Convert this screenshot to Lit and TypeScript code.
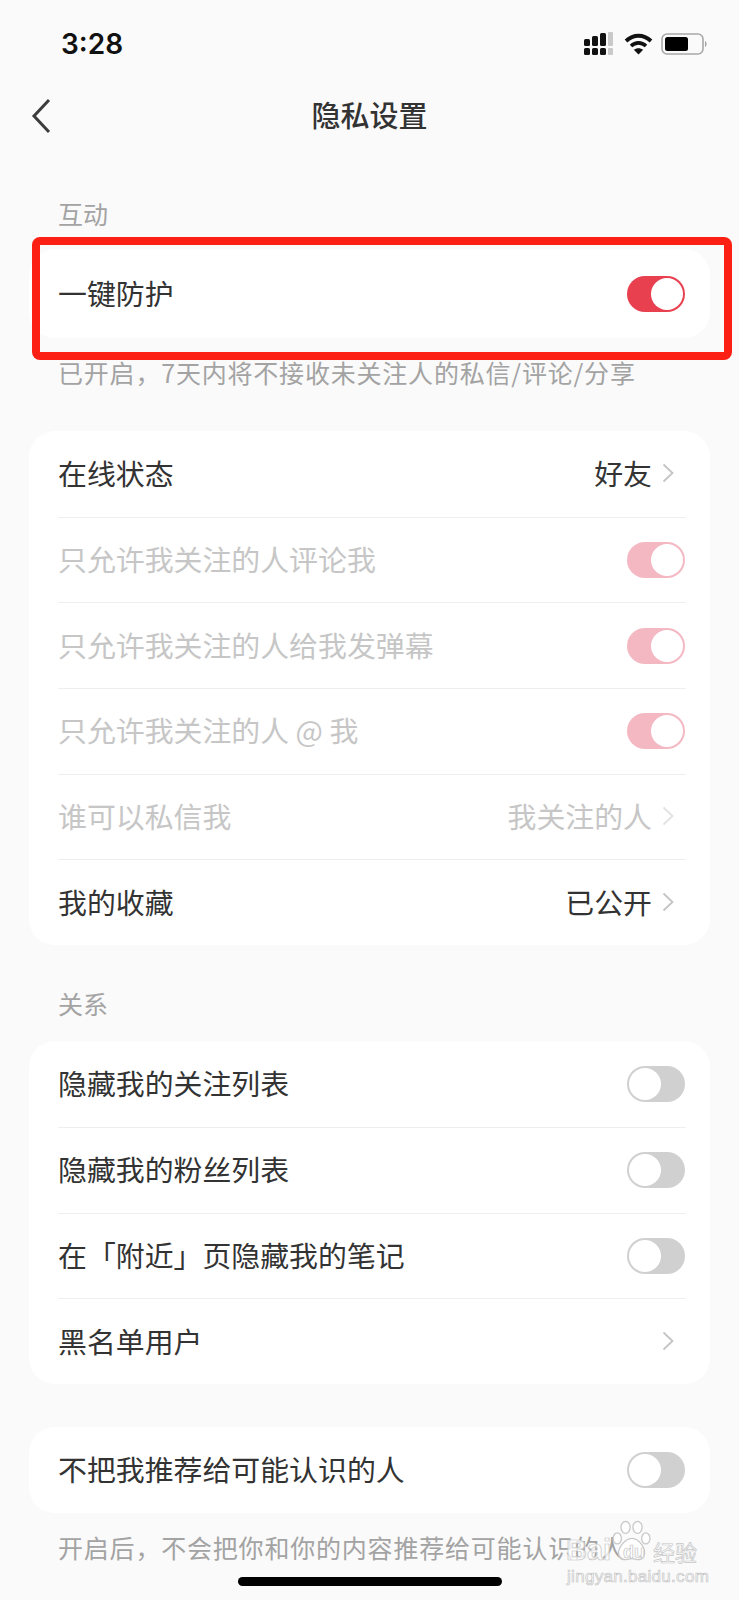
import { LitElement, css, html, nothing } from "lit";
import { customElement } from "lit/decorators.js";
import { classMap } from "lit/directives/class-map.js";

type Row = {
  label: string;
  value?: string;
  toggle?: "on" | "off";
  chevron?: boolean;
  dim?: boolean;
};

const privacy: Row[] = [
  { label: "在线状态", value: "好友", chevron: true },
  { label: "只允许我关注的人评论我", toggle: "on", dim: true },
  { label: "只允许我关注的人给我发弹幕", toggle: "on", dim: true },
  { label: "只允许我关注的人 @ 我", toggle: "on", dim: true },
  { label: "谁可以私信我", value: "我关注的人", chevron: true, dim: true },
  { label: "我的收藏", value: "已公开", chevron: true },
];

const relations: Row[] = [
  { label: "隐藏我的关注列表", toggle: "off" },
  { label: "隐藏我的粉丝列表", toggle: "off" },
  { label: "在「附近」页隐藏我的笔记", toggle: "off" },
  { label: "黑名单用户", chevron: true },
];

@customElement("app-root")
export class AppRoot extends LitElement {
  static styles = css`
    :host {
      display: block;
      position: relative;
      width: 739px;
      height: 1600px;
      overflow: hidden;
      background: #fafafa;
      font-family: "Noto Sans CJK SC", "Noto Sans", sans-serif;
      color: #333;
    }

    .status {
      height: 80px;
      padding: 8px 32px 0 61px;
      box-sizing: border-box;
      display: flex;
      align-items: center;
      justify-content: space-between;
    }

    .time {
      font-family: "Inter", sans-serif;
      font-weight: 600;
      font-size: 28px;
      color: #111;
    }

    .status-icons {
      display: flex;
      align-items: center;
      gap: 8px;
    }

    .signal {
      margin-right: 2px;
    }

    .nav {
      height: 72px;
      box-sizing: border-box;
      padding-bottom: 4px;
      position: relative;
      display: flex;
      align-items: center;
      justify-content: center;
    }

    .back {
      position: absolute;
      left: 31px;
      top: 18px;
    }

    .title {
      font-size: 29px;
      font-weight: 500;
      color: #333;
    }

    main {
      padding: 0 29px;
    }

    .label,
    .note {
      height: 34px;
      padding-left: 29px;
      font-size: 25px;
      color: #a3a3a3;
      white-space: nowrap;
    }

    .label {
      line-height: 30px;
    }

    .note {
      line-height: 28px;
      letter-spacing: 0.8px;
    }

    .label.first {
      margin-top: 46px;
      margin-bottom: 17px;
    }

    .label.second {
      margin-top: 43px;
      margin-bottom: 19px;
    }

    .note.first {
      margin-top: 20px;
      margin-bottom: 39px;
    }

    .note.last {
      margin-top: 20px;
    }

    .card {
      position: relative;
      background: #fff;
      border-radius: 26px;
      width: 681px;
    }

    .card.gap {
      margin-top: 43px;
    }

    .row {
      height: 85.7px;
      margin: 0 24px 0 29px;
      display: flex;
      align-items: center;
      justify-content: space-between;
      box-sizing: border-box;
      border-top: 1px solid #eeeeee;
      font-size: 28.9px;
      color: #333;
    }

    .row:first-child {
      border-top: none;
    }

    .row.tall {
      height: 89px;
    }

    .row.dim {
      color: #c6c6c6;
    }

    .text {
      margin-bottom: 4px;
    }

    .right {
      display: flex;
      align-items: center;
    }

    .value {
      margin-right: 10px;
      margin-bottom: 4px;
    }

    .chevron {
      margin-right: 12px;
      margin-bottom: 2px;
      display: block;
    }

    .switch {
      position: relative;
      width: 58px;
      height: 36px;
      border-radius: 18px;
      margin-right: 1px;
      background: #d0d0d0;
    }

    .switch.on {
      background: #e8404f;
    }

    .switch.on.dim {
      background: #f4b8c3;
    }

    .knob {
      position: absolute;
      top: 2px;
      left: 2px;
      width: 32px;
      height: 32px;
      border-radius: 50%;
      background: #fff;
    }

    .switch.on .knob {
      left: 24px;
    }

    .highlight {
      position: absolute;
      top: -12px;
      left: 3px;
      right: -22px;
      bottom: -22px;
      border: 8px solid #fb1f14;
      border-radius: 8px;
      pointer-events: none;
    }

    .home {
      position: absolute;
      left: 238px;
      top: 1577px;
      width: 264px;
      height: 9px;
      border-radius: 5px;
      background: #000;
    }

    .watermark {
      position: absolute;
      left: 566px;
      top: 1520px;
      width: 140px;
      height: 66px;
      color: rgba(255, 255, 255, 0.75);
      -webkit-text-stroke: 0.7px #c6c6c6;
      font-family: "Liberation Sans", sans-serif;
      white-space: nowrap;
    }

    .watermark span {
      position: absolute;
    }

    .wm-paw {
      position: absolute;
      left: 45px;
      top: 0;
    }

    .wm-bai {
      left: 0;
      top: 14px;
      font-size: 29px;
      font-weight: 700;
    }

    .wm-du {
      left: 57px;
      top: 22px;
      font-size: 18px;
      font-weight: 700;
    }

    .wm-jing {
      left: 87px;
      top: 15px;
      font-size: 22px;
      font-family: "Noto Sans CJK SC", sans-serif;
    }

    .wm-url {
      left: 1px;
      top: 47px;
      font-size: 17px;
      letter-spacing: 0.3px;
    }
  `;

  private renderRow(r: Row, tall = false) {
    return html`
      <div class=${classMap({ row: true, dim: !!r.dim, tall })}>
        <span class="text">${r.label}</span>
        <div class="right">
          ${r.value ? html`<span class="value">${r.value}</span>` : nothing}
          ${r.chevron ? this.renderChevron(!!r.dim) : nothing}
          ${r.toggle ? this.renderSwitch(r.toggle === "on", !!r.dim) : nothing}
        </div>
      </div>
    `;
  }

  private renderChevron(dim: boolean) {
    return html`
      <svg class="chevron" width="12" height="20" viewBox="0 0 12 20" fill="none">
        <path d="M1.5 1.5 L10.5 10 L1.5 18.5" stroke=${dim ? "#e2e2e2" : "#c4c4c4"} stroke-width="1.8" />
      </svg>
    `;
  }

  private renderSwitch(on: boolean, dim: boolean) {
    return html`
      <div class=${classMap({ switch: true, on, dim })}>
        <div class="knob"></div>
      </div>
    `;
  }

  private renderStatusIcons() {
    return html`
      <div class="status-icons">
        <svg class="signal" width="30" height="24" viewBox="0 0 30 24">
          <g fill="#111">
            <rect x="0" y="7" width="6" height="7" rx="1.5" />
            <rect x="8" y="4" width="6" height="10" rx="1.5" />
            <rect x="16" y="1" width="6" height="13" rx="1.5" />
            <rect x="0" y="16" width="6" height="7" rx="1.5" />
            <rect x="8" y="16" width="6" height="7" rx="1.5" />
            <rect x="16" y="16" width="6" height="7" rx="1.5" />
          </g>
          <g fill="#c9c9c9">
            <rect x="24" y="0" width="5" height="14" rx="1" />
            <rect x="24" y="16" width="5" height="7" rx="1" />
          </g>
        </svg>
        <svg width="29" height="22" viewBox="0 0 29 22" fill="none">
          <path d="M2 8 C9.5 1 19.5 1 27 8" stroke="#111" stroke-width="3.8" />
          <path d="M7 13 C11.5 8.8 17.5 8.8 22 13" stroke="#111" stroke-width="3.6" />
          <path d="M14.5 21.5 L9.8 16.8 C12.5 14.6 16.5 14.6 19.2 16.8 Z" fill="#111" />
        </svg>
        <svg width="46" height="22" viewBox="0 0 46 22" fill="none">
          <rect x="1" y="1" width="41" height="20" rx="5" stroke="#a8a8a8" stroke-width="1.6" />
          <rect x="4" y="4" width="23" height="14" rx="2.5" fill="#000" />
          <path d="M44 8 C46 9 46 13 44 14 Z" fill="#a0a0a0" />
        </svg>
      </div>
    `;
  }

  render() {
    return html`
      <div class="status">
        <span class="time">3:28</span>
        ${this.renderStatusIcons()}
      </div>
      <div class="nav">
        <svg class="back" width="20" height="36" viewBox="0 0 20 36" fill="none">
          <path d="M18 2 L3 18 L18 34" stroke="#3c3c3c" stroke-width="3" />
        </svg>
        <span class="title">隐私设置</span>
      </div>
      <main>
        <div class="label first">互动</div>
        <div class="card">
          ${this.renderRow({ label: "一键防护", toggle: "on" }, true)}
          <div class="highlight"></div>
        </div>
        <div class="note first">已开启，7天内将不接收未关注人的私信/评论/分享</div>
        <div class="card">${privacy.map((r) => this.renderRow(r))}</div>
        <div class="label second">关系</div>
        <div class="card">${relations.map((r) => this.renderRow(r))}</div>
        <div class="card gap">
          ${this.renderRow({ label: "不把我推荐给可能认识的人", toggle: "off" })}
        </div>
        <div class="note last">开启后，不会把你和你的内容推荐给可能认识的人</div>
      </main>
      <div class="watermark">
        <svg class="wm-paw" width="42" height="46" viewBox="0 0 44 50" fill="rgba(255,255,255,0.7)" stroke="#c8c8c8" stroke-width="1.4">
          <ellipse cx="6" cy="20" rx="4.5" ry="6" />
          <ellipse cx="15" cy="8" rx="5" ry="6.5" />
          <ellipse cx="28" cy="8" rx="5" ry="6.5" />
          <ellipse cx="37" cy="20" rx="4.5" ry="6" />
          <path d="M22 20 C30 20 38 32 35 39 C32 46 26 42 22 42 C18 42 11 46 8 39 C5 32 14 20 22 20 Z" />
        </svg>
        <span class="wm-bai">Bai</span>
        <span class="wm-du">du</span>
        <span class="wm-jing">经验</span>
        <span class="wm-url">jingyan.baidu.com</span>
      </div>
      <div class="home"></div>
    `;
  }
}
